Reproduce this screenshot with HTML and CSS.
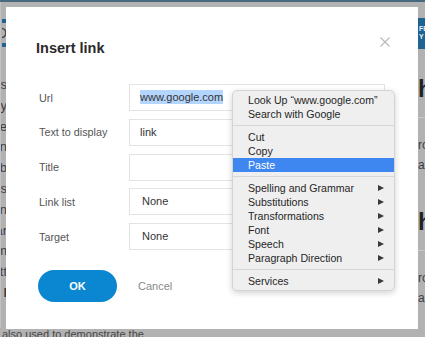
FILE: index.html
```html
<!DOCTYPE html>
<html>
<head>
<meta charset="utf-8">
<link rel="stylesheet" href="styles.css">
</head>
<body>
<div class="page">
  <div class="topline"></div>
  <div class="page-main">
    <div class="left-sliver">
      <div class="lbar"></div>
      <div class="lbrand">D</div>
      <div class="lbar"></div>
      <div class="ltext">
        <p>is</p><p>y '</p><p>re</p><p>an</p><p>ab</p><p>es</p><p>on</p><p>ar</p><p>em</p><p>tt</p><p class="b">l</p>
      </div>
    </div>
    <div class="right-sliver">
      <div class="rbox">FB<br>Y</div>
      <div class="rsec">
        <div class="rhead">h</div>
        <div class="rline"></div>
        <p>ro</p><p>a</p>
      </div>
      <div class="rsec">
        <div class="rhead">h</div>
        <div class="rline"></div>
        <p>ro</p><p>a</p>
      </div>
    </div>
  </div>
  <p class="footer-text">also used to demonstrate the</p>
</div>

<div class="dialog">
  <div class="dlg-head">
    <h1 class="dlg-title">Insert link</h1>
    <svg class="dlg-close" width="10" height="10" viewBox="0 0 10 10"><path d="M0.5 0.5L9.5 9.5M9.5 0.5L0.5 9.5" stroke="#b9b9b9" stroke-width="1.1" fill="none"/></svg>
  </div>
  <div class="form">
    <label class="lbl">Url</label>
    <div class="field"><span class="sel">www.google.com</span></div>
    <label class="lbl">Text to display</label>
    <div class="field">link</div>
    <label class="lbl">Title</label>
    <div class="field"></div>
    <label class="lbl">Link list</label>
    <div class="field select">None</div>
    <label class="lbl">Target</label>
    <div class="field select">None</div>
  </div>
  <div class="actions">
    <button class="btn-ok">OK</button>
    <button class="btn-cancel">Cancel</button>
  </div>
</div>

<div class="ctxmenu">
  <div class="item">Look Up “www.google.com”</div>
  <div class="item">Search with Google</div>
  <div class="sep"></div>
  <div class="item">Cut</div>
  <div class="item">Copy</div>
  <div class="item active">Paste</div>
  <div class="sep"></div>
  <div class="item sub">Spelling and Grammar<span class="arr"></span></div>
  <div class="item sub">Substitutions<span class="arr"></span></div>
  <div class="item sub">Transformations<span class="arr"></span></div>
  <div class="item sub">Font<span class="arr"></span></div>
  <div class="item sub">Speech<span class="arr"></span></div>
  <div class="item sub">Paragraph Direction<span class="arr"></span></div>
  <div class="sep"></div>
  <div class="item sub">Services<span class="arr"></span></div>
</div>
</body>
</html>
```

FILE: styles.css
```css
* { box-sizing: border-box; }
html, body {
  margin: 0;
  padding: 0;
  width: 425px;
  height: 337px;
  overflow: hidden;
  background: #b2b2b2;
  font-family: "Liberation Sans", Arial, sans-serif;
}
.page {
  display: flex;
  flex-direction: column;
  height: 337px;
}
.topline {
  height: 2px;
  background: #49697f;
  flex: none;
}
.page-main {
  display: flex;
  justify-content: space-between;
  flex: 1;
  min-height: 0;
}
.left-sliver {
  width: 7px;
  padding-left: 1px;
  border-left: 1px solid #c2c2c2;
  overflow: hidden;
  padding-top: 17px;
}
.lbar {
  height: 4px;
  background: #1f6394;
}
.lbrand {
  height: 20px;
  font-size: 14px;
  line-height: 20px;
  color: #3a3a3a;
  text-align: right;
  direction: rtl;
  overflow: hidden;
}
.ltext {
  margin-top: 28px;
  text-align: right;
  direction: rtl;
}
.ltext p {
  margin: 0;
  font-size: 13px;
  line-height: 20.8px;
  color: #3c3c3c;
  white-space: nowrap;
}
.ltext p.b { font-weight: bold; }
.right-sliver {
  width: 7px;
  overflow: hidden;
  padding-top: 16px;
}
.rbox {
  height: 31px;
  background: #1f6394;
  color: #e6eef5;
  font-size: 7px;
  line-height: 8px;
  padding: 7px 0 0 1px;
  font-weight: bold;
  white-space: nowrap;
}
.rsec { padding-top: 28px; }
.rsec + .rsec { padding-top: 38px; }
.rhead {
  font-size: 24px;
  font-weight: bold;
  line-height: 24px;
  color: #222;
  white-space: nowrap;
}
.rline {
  height: 1px;
  background: #c9c9c9;
  margin-top: 16px;
}
.right-sliver p {
  margin: 20px 0 0;
  font-size: 12px;
  line-height: 14px;
  color: #3c3c3c;
  white-space: nowrap;
}
.right-sliver p + p { margin-top: 6px; }
.footer-text {
  margin: 0 0 0 2px;
  font-size: 11px;
  line-height: 12px;
  height: 9px;
  color: #454545;
  white-space: nowrap;
  overflow: hidden;
  flex: none;
}

/* dialog */
.dialog {
  position: absolute;
  left: 6px;
  top: 7px;
  width: 412px;
  height: 322px;
  background: #fff;
  display: flex;
  flex-direction: column;
}
.dlg-head {
  display: flex;
  justify-content: space-between;
  align-items: flex-start;
  padding: 30px 28px 0 30px;
  height: 77px;
}
.dlg-title {
  margin: 0;
  font-size: 14.5px;
  line-height: 22px;
  font-weight: bold;
  color: #2a2a2a;
}
.dlg-close { flex: none; }
.form {
  display: grid;
  grid-template-columns: 90px 1fr;
  row-gap: 7.75px;
  padding: 0 33px 0 33px;
  align-items: center;
}
.lbl {
  font-size: 10.8px;
  color: #555;
}
.field {
  height: 27px;
  border: 1px solid #e3e3e3;
  padding: 0 10px;
  font-size: 11px;
  line-height: 25px;
  color: #333;
}
.field.select { padding-left: 12px; }
.sel { background: #b4d5fd; padding: 1px 0; }
.actions {
  display: flex;
  align-items: center;
  padding: 20px 0 0 32px;
  gap: 21px;
}
.btn-ok {
  width: 79px;
  height: 32px;
  border: none;
  border-radius: 16px;
  background: #0b87d2;
  color: #fff;
  font-family: "Liberation Sans", Arial, sans-serif;
  font-weight: bold;
  font-size: 11px;
  padding: 0;
}
.btn-cancel {
  border: none;
  background: none;
  padding: 0;
  font-family: "Liberation Sans", Arial, sans-serif;
  font-size: 11px;
  color: #888;
}

/* context menu */
.ctxmenu {
  position: absolute;
  left: 232px;
  top: 90px;
  width: 163px;
  height: 201px;
  background: #efefef;
  border: 1px solid #d4d4d4;
  border-radius: 5px;
  padding: 2px 0;
  box-shadow: 0 2px 6px rgba(0,0,0,0.18);
  font-family: "Liberation Sans", Arial, sans-serif;
  font-size: 10.6px;
  color: #262626;
}
.item {
  height: 14px;
  line-height: 14px;
  padding: 0 10px 0 15px;
  display: flex;
  justify-content: space-between;
  align-items: center;
  white-space: nowrap;
}
.item.active {
  background: #3f87f0;
  color: #fff;
}
.arr {
  width: 0;
  height: 0;
  border-left: 6px solid #3a3a3a;
  border-top: 3.5px solid transparent;
  border-bottom: 3.5px solid transparent;
}
.sep {
  height: 9px;
  padding-top: 4px;
}
.sep::before {
  content: "";
  display: block;
  height: 1px;
  background: #d7d7d7;
}
```
